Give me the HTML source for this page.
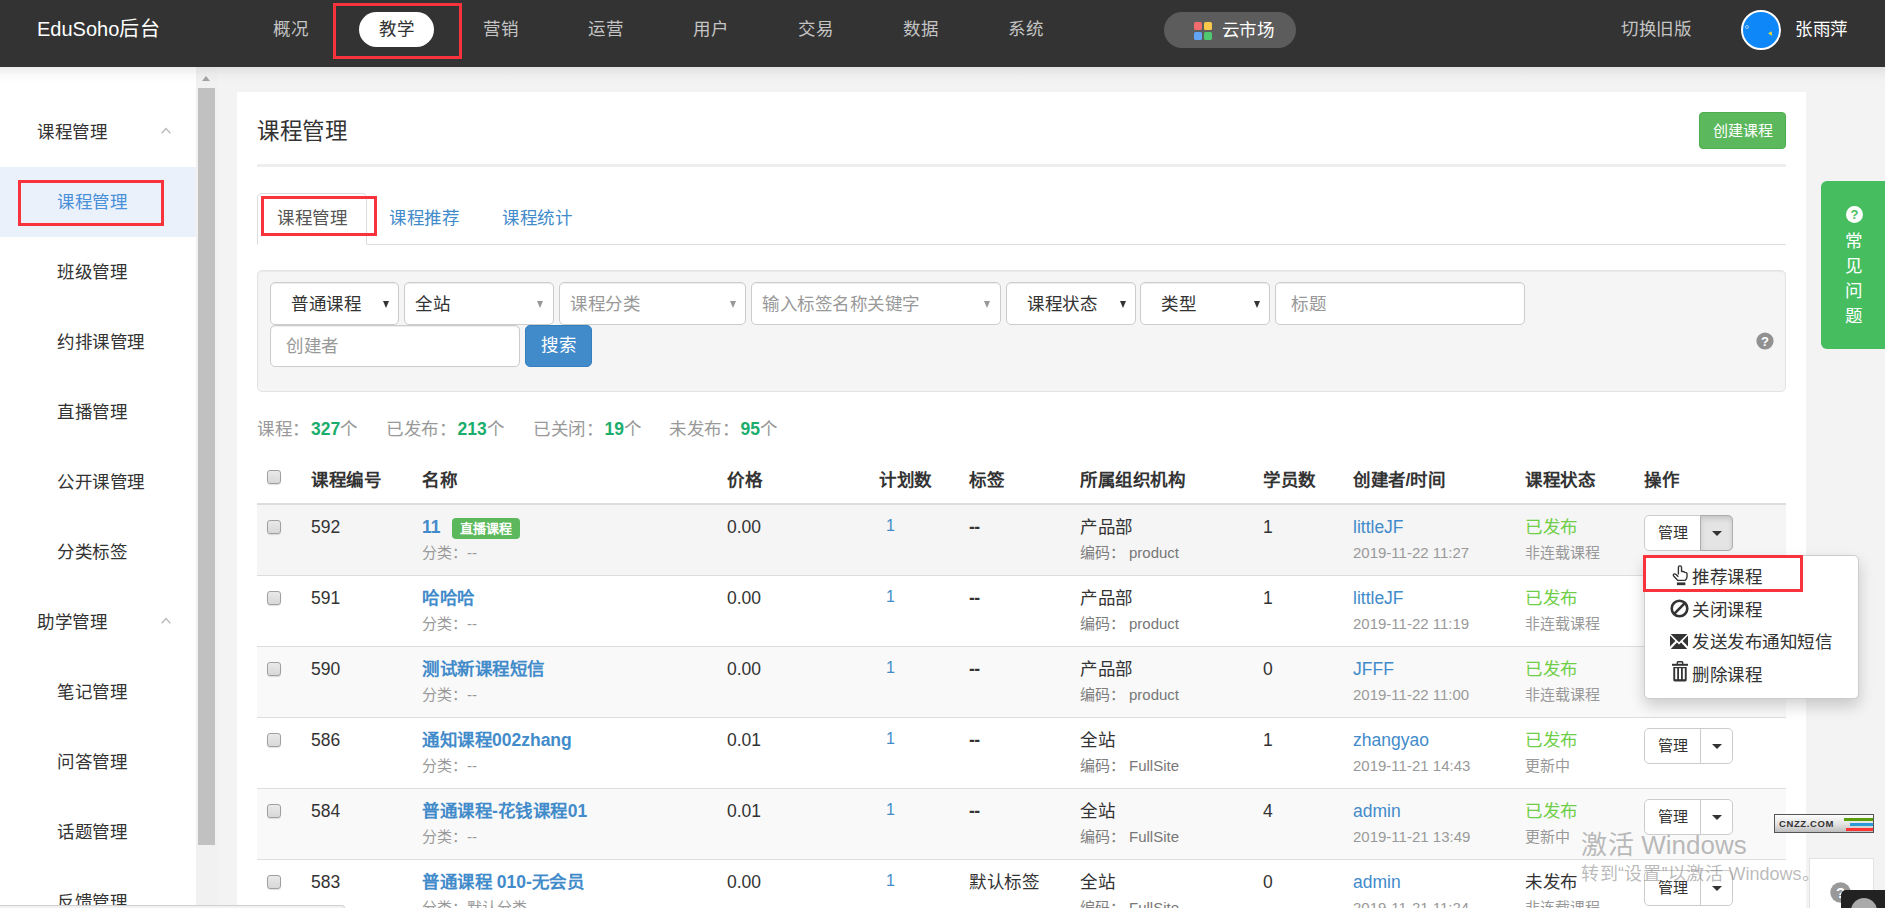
<!DOCTYPE html>
<html lang="zh-CN">
<head>
<meta charset="utf-8">
<title>课程管理</title>
<style>
*{box-sizing:border-box;margin:0;padding:0}
html,body{width:1885px;height:908px;overflow:hidden;background:#f3f3f3;font-family:"Liberation Sans",sans-serif;color:#333;font-size:17.5px}
.abs{position:absolute}
#page{position:relative;width:1885px;height:908px;overflow:hidden}
/* top nav */
#nav{left:0;top:0;width:1885px;height:67px;background:#333}
#nav .t{position:absolute;top:0;height:58px;line-height:58px;font-size:17.5px;color:#c4c4c4;white-space:nowrap}
#brand{left:37px;font-size:20px !important;color:#fff !important}
.pill{position:absolute;left:359px;top:12px;width:75px;height:35px;border-radius:18px;background:#fff;color:#333;font-size:17.5px;line-height:34px;text-align:center}
.redbox{position:absolute;border:3px solid #f8333c}
#cloud{position:absolute;left:1163.5px;top:12px;width:132px;height:36px;border-radius:18px;background:#5c5c5c;color:#fff;font-size:17.5px;line-height:36px}
#avatar{position:absolute;left:1741px;top:10px;width:40px;height:40px;border-radius:50%;background:#0e87f8;border:2.7px solid #fff}
/* sidebar */
#side{left:0;top:67px;width:196px;height:841px;background:#fff}
#side .g{position:absolute;left:37px;margin-top:.5px;font-size:17.5px;color:#333;height:30px;line-height:30px;white-space:nowrap}
#side .i{position:absolute;left:57px;margin-top:.5px;font-size:17.5px;color:#333;height:30px;line-height:30px;white-space:nowrap}
#sbar{left:196px;top:67px;width:20.5px;height:841px;background:#f1f1f1}
#sthumb{left:198px;top:88px;width:17px;height:757px;background:#c1c1c1}

#side .chev{position:absolute;left:161px;width:10px;height:7px}
#side .act{position:absolute;left:0;top:100px;width:196px;height:70px;background:#eaf1fb}
#sideshadow{left:0;top:67px;width:1885px;height:16px;background:linear-gradient(rgba(0,0,0,.075),rgba(0,0,0,.02) 55%,rgba(0,0,0,0))}
/* main header */
#title{left:257px;top:115.3px;font-size:22.5px;line-height:34px;color:#333;white-space:nowrap}
#create{left:1699px;top:112px;width:87px;height:37px;border-radius:4px;background:#5cb85c;border:1px solid #4cae4c;color:#fff;font-size:15px;line-height:35px;text-align:center}
#hr1{left:257px;top:164px;width:1529px;height:3px;background:#eee}
#tabline{left:257px;top:244px;width:1529px;height:1px;background:#ddd}
#tab1{left:257px;top:192.5px;width:110px;height:52.5px;border:1px solid #ddd;border-bottom:1px solid #fff;border-radius:5px 5px 0 0;background:#fff}
.tabt{position:absolute;top:203px;height:30px;line-height:30px;font-size:17.5px;white-space:nowrap}
/* well */
#well{left:257px;top:270px;width:1529px;height:122px;background:#f5f5f5;border:1px solid #e3e3e3;border-radius:5px;box-shadow:inset 0 1px 1px rgba(0,0,0,.05)}
.sel{position:absolute;top:282px;height:43px;background:#fff;border:1px solid #ccc;border-radius:5px;font-size:17.5px;line-height:41px;white-space:nowrap;box-shadow:inset 0 1px 1px rgba(0,0,0,.075)}
.sel span{position:absolute;top:1px}
.sel i{position:absolute;top:17.5px;margin-left:1px;width:0;height:0;border-left:3.5px solid transparent;border-right:3.5px solid transparent;border-top:7px solid #333}
.sel i.g{border-top-color:#999}
.ph{color:#999}
#search{left:525px;top:325px;width:67px;height:42px;border-radius:5px;background:#428bca;border:1px solid #357ebd;color:#fff;font-size:17.5px;line-height:38px;text-align:center}

/* stats */
.st{position:absolute;top:413.7px;height:30px;line-height:30px;font-size:17.5px;color:#999;white-space:nowrap}
.st b{color:#1bad6c;font-weight:bold;margin-left:1.5px}
/* table */
.th{position:absolute;top:465px;height:30px;line-height:30px;font-size:17.5px;font-weight:bold;color:#333;white-space:nowrap}
.row{position:absolute;left:257px;width:1529px;height:71px;border-top:1px solid #ddd}
.row div,.row a{position:absolute;white-space:nowrap}
.l1{top:6.5px;height:30px;line-height:30px;font-size:17.5px;color:#333}
.l2{top:34.8px;height:26px;line-height:26px;font-size:15px;color:#999}
.lk{color:#428bca}
.ok{color:#6fce47}
.cb{position:absolute;left:10px;top:15.2px;width:14px;height:14px;border:1px solid #a0a0a0;border-radius:3px;background:linear-gradient(#e9e9e9,#d8d8d8);box-shadow:0 1px 1px rgba(0,0,0,.12)}
.lab{top:12.5px;left:195px;width:68px;height:21px;border-radius:4px;background:#5cb85c;color:#fff;font-size:13px;font-weight:bold;line-height:21px;text-align:center}
.btn{left:1387px;top:10px;width:89px;height:36px;border:1px solid #ccc;border-radius:5px;background:#fff}
.btn span{position:absolute;left:13px;top:0;line-height:34px;font-size:15px;color:#333}
.btn em{position:absolute;left:55px;top:0;width:1px;height:34px;background:#ccc}
.btn i{position:absolute;left:67px;top:15px;width:0;height:0;border-left:5px solid transparent;border-right:5px solid transparent;border-top:5px solid #333}
/* dropdown */
#menu{left:1644px;top:554.7px;width:215px;height:144px;background:#fff;border:1px solid #ccc;border-radius:5px;box-shadow:0 7px 15px rgba(0,0,0,.18)}
.mi{position:absolute;left:1692px;height:30px;line-height:30px;font-size:17.5px;color:#333;white-space:nowrap}
/* right tab */
#faq{left:1821px;top:181px;width:70px;height:168px;border-radius:6px;background:#46be60}
.fq{position:absolute;left:1845px;width:18px;height:24px;line-height:24px;font-size:17.5px;color:#fff;text-align:center}
.c{letter-spacing:.5px}
#title .c{letter-spacing:-.5px}
.l2 .c,.btn .c,.lab .c,#create .c,.wm .c{letter-spacing:0}
/* main */
#main{left:237px;top:92px;width:1569px;height:830px;background:#fff}
</style>
</head>
<body>
<div id="page">

<!-- NAV -->
<div id="nav" class="abs">
  <div class="t" id="brand">EduSoho<font class="c">后台</font></div>
  <div class="t" style="left:273px"><font class="c">概况</font></div>
  <div class="pill"><font class="c">教学</font></div>
  <div class="redbox" style="left:333px;top:3px;width:129px;height:56px"></div>
  <div class="t" style="left:483px"><font class="c">营销</font></div>
  <div class="t" style="left:588px"><font class="c">运营</font></div>
  <div class="t" style="left:693px"><font class="c">用户</font></div>
  <div class="t" style="left:798px"><font class="c">交易</font></div>
  <div class="t" style="left:903px"><font class="c">数据</font></div>
  <div class="t" style="left:1008px"><font class="c">系统</font></div>
  <div id="cloud"><svg style="position:absolute;left:30px;top:10px" width="18" height="18" viewBox="0 0 18 18"><rect x="0" y="0" width="8" height="8" rx="1.6" fill="#f06b6b"/><rect x="10" y="0" width="8" height="8" rx="1.6" fill="#fbc94a"/><rect x="0" y="10" width="8" height="8" rx="1.6" fill="#62a4f4"/><rect x="10" y="10" width="8" height="8" rx="1.6" fill="#4fc870"/></svg><span style="position:absolute;left:58px"><font class="c">云市场</font></span></div>
  <div class="t" style="left:1621px"><font class="c">切换旧版</font></div>
  <div id="avatar"><i style="position:absolute;left:26px;top:20px;width:0;height:0;border-left:4px solid #f5dc2a;border-top:2.5px solid transparent;border-bottom:2.5px solid transparent;transform:rotate(55deg)"></i><i style="position:absolute;left:2px;top:13px;width:4px;height:4px;border-radius:50%;border:1px solid rgba(255,255,255,.55)"></i></div>
  <div class="t" style="left:1795px;color:#fff"><font class="c">张雨萍</font></div>
</div>

<!-- SIDEBAR -->
<div id="side" class="abs">
  <div class="g" style="top:49px"><font class="c">课程管理</font></div>
  <svg class="chev" style="top:60px" viewBox="0 0 10 7"><path d="M0.7 6.3 L5 1.6 L9.3 6.3" fill="none" stroke="#bbb" stroke-width="1.4"/></svg>
  <div class="act"></div>
  <div class="i" style="top:119px;color:#4a90d9"><font class="c">课程管理</font></div>
  <div class="redbox" style="left:18px;top:113px;width:146px;height:46px;border-width:3px"></div>
  <div class="i" style="top:189px"><font class="c">班级管理</font></div>
  <div class="i" style="top:259px"><font class="c">约排课管理</font></div>
  <div class="i" style="top:329px"><font class="c">直播管理</font></div>
  <div class="i" style="top:399px"><font class="c">公开课管理</font></div>
  <div class="i" style="top:469px"><font class="c">分类标签</font></div>
  <div class="g" style="top:539px"><font class="c">助学管理</font></div>
  <svg class="chev" style="top:550px" viewBox="0 0 10 7"><path d="M0.7 6.3 L5 1.6 L9.3 6.3" fill="none" stroke="#bbb" stroke-width="1.4"/></svg>
  <div class="i" style="top:609px"><font class="c">笔记管理</font></div>
  <div class="i" style="top:679px"><font class="c">问答管理</font></div>
  <div class="i" style="top:749px"><font class="c">话题管理</font></div>
  <div class="i" style="top:819px"><font class="c">反馈管理</font></div>
</div>
<div id="sbar" class="abs"></div>
<div id="sthumb" class="abs"></div>
<div class="abs" style="left:202px;top:76px;width:0;height:0;border-left:4.5px solid transparent;border-right:4.5px solid transparent;border-bottom:5px solid #a3a3a3"></div>
<div id="sideshadow" class="abs"></div>

<!-- MAIN -->
<div id="main" class="abs"></div>
<div id="title" class="abs"><font class="c">课程管理</font></div>
<div id="create" class="abs"><font class="c">创建课程</font></div>
<div id="hr1" class="abs"></div>
<div id="tabline" class="abs"></div>
<div id="tab1" class="abs"></div>
<div class="tabt" style="left:277px;color:#555"><font class="c">课程管理</font></div>
<div class="tabt" style="left:389px;color:#428bca"><font class="c">课程推荐</font></div>
<div class="tabt" style="left:502px;color:#428bca"><font class="c">课程统计</font></div>
<div class="redbox" style="left:260.5px;top:195.5px;width:116px;height:40px;border-width:3px"></div>

<div id="well" class="abs"></div>
<div class="sel" style="left:270px;width:129px"><span style="left:20px"><font class="c">普通课程</font></span><i style="left:111px"></i></div>
<div class="sel" style="left:404px;width:150px"><span style="left:10px"><font class="c">全站</font></span><i class="g" style="left:131px"></i></div>
<div class="sel" style="left:559px;width:187px"><span class="ph" style="left:10px"><font class="c">课程分类</font></span><i class="g" style="left:169px"></i></div>
<div class="sel" style="left:751px;width:250px"><span class="ph" style="left:10px"><font class="c">输入标签名称关键字</font></span><i class="g" style="left:231px"></i></div>
<div class="sel" style="left:1006px;width:130px"><span style="left:20px"><font class="c">课程状态</font></span><i style="left:112px"></i></div>
<div class="sel" style="left:1140px;width:130px"><span style="left:20px"><font class="c">类型</font></span><i style="left:112px"></i></div>
<div class="sel" style="left:1275px;width:250px"><span class="ph" style="left:15px"><font class="c">标题</font></span></div>
<div class="sel" style="left:270px;top:325px;width:250px;height:42px"><span class="ph" style="left:15px;top:0px"><font class="c">创建者</font></span></div>
<div id="search" class="abs"><font class="c">搜索</font></div>
<svg class="abs" style="left:1756px;top:332px" width="18" height="18" viewBox="0 0 18 18"><circle cx="9" cy="9" r="8.6" fill="#919191"/><text x="9" y="14" font-family="Liberation Sans" font-weight="bold" font-size="13" fill="#fff" text-anchor="middle">?</text></svg>


<div class="st" style="left:257px"><font class="c">课程：</font><b>327</b><font class="c">个</font></div>
<div class="st" style="left:386px"><font class="c">已发布：</font><b>213</b><font class="c">个</font></div>
<div class="st" style="left:533px"><font class="c">已关闭：</font><b>19</b><font class="c">个</font></div>
<div class="st" style="left:669px"><font class="c">未发布：</font><b>95</b><font class="c">个</font></div>

<span class="cb" style="left:267px;top:470px"></span>
<div class="th" style="left:311px"><font class="c">课程编号</font></div>
<div class="th" style="left:422px"><font class="c">名称</font></div>
<div class="th" style="left:727px"><font class="c">价格</font></div>
<div class="th" style="left:879px"><font class="c">计划数</font></div>
<div class="th" style="left:969px"><font class="c">标签</font></div>
<div class="th" style="left:1080px"><font class="c">所属组织机构</font></div>
<div class="th" style="left:1263px"><font class="c">学员数</font></div>
<div class="th" style="left:1353px"><font class="c">创建者</font>/<font class="c">时间</font></div>
<div class="th" style="left:1525px"><font class="c">课程状态</font></div>
<div class="th" style="left:1644px"><font class="c">操作</font></div>
<div class="abs" style="left:257px;top:502.5px;width:1529px;height:2.5px;background:#ddd;z-index:2"></div>
<div class="row" style="top:504px;background:#f5f5f5"><span class="cb"></span><div class="l1" style="left:54px">592</div><div class="l1 lk" style="left:165px;font-weight:bold">11</div><div class="lab"><font class="c">直播课程</font></div><div class="l2" style="left:165px"><font class="c">分类：</font>--</div><div class="l1" style="left:470px">0.00</div><div class="l1 lk" style="left:629px;font-size:16px;top:6px">1</div><div class="l1" style="left:712px;font-weight:bold;letter-spacing:-.5px">--</div><div class="l1" style="left:823px"><font class="c">产品部</font></div><div class="l2" style="left:823px;color:#7d7d7d"><font class="c">编码：</font></div><div class="l2" style="left:872px;color:#777">product</div><div class="l1" style="left:1006px">1</div><div class="l1 lk" style="left:1096px">littleJF</div><div class="l2" style="left:1096px">2019-11-22 11:27</div><div class="l1 ok" style="left:1268px"><font class="c">已发布</font></div><div class="l2" style="left:1268px"><font class="c">非连载课程</font></div><div class="btn"><span><font class="c">管理</font></span><em></em><b style="position:absolute;left:55px;top:-1px;width:33px;height:36px;background:#e4e4e4;border:1px solid #adadad;border-radius:0 5px 5px 0;box-shadow:inset 0 3px 5px rgba(0,0,0,.125)"></b><i></i></div></div>
<div class="row" style="top:575.1px;background:#fff"><span class="cb"></span><div class="l1" style="left:54px">591</div><div class="l1 lk" style="left:165px;font-weight:bold"><font class="c">哈哈哈</font></div><div class="l2" style="left:165px"><font class="c">分类：</font>--</div><div class="l1" style="left:470px">0.00</div><div class="l1 lk" style="left:629px;font-size:16px;top:6px">1</div><div class="l1" style="left:712px;font-weight:bold;letter-spacing:-.5px">--</div><div class="l1" style="left:823px"><font class="c">产品部</font></div><div class="l2" style="left:823px;color:#7d7d7d"><font class="c">编码：</font></div><div class="l2" style="left:872px;color:#777">product</div><div class="l1" style="left:1006px">1</div><div class="l1 lk" style="left:1096px">littleJF</div><div class="l2" style="left:1096px">2019-11-22 11:19</div><div class="l1 ok" style="left:1268px"><font class="c">已发布</font></div><div class="l2" style="left:1268px"><font class="c">非连载课程</font></div><div class="btn"><span><font class="c">管理</font></span><em></em><i></i></div></div>
<div class="row" style="top:646.2px;background:#f9f9f9"><span class="cb"></span><div class="l1" style="left:54px">590</div><div class="l1 lk" style="left:165px;font-weight:bold"><font class="c">测试新课程短信</font></div><div class="l2" style="left:165px"><font class="c">分类：</font>--</div><div class="l1" style="left:470px">0.00</div><div class="l1 lk" style="left:629px;font-size:16px;top:6px">1</div><div class="l1" style="left:712px;font-weight:bold;letter-spacing:-.5px">--</div><div class="l1" style="left:823px"><font class="c">产品部</font></div><div class="l2" style="left:823px;color:#7d7d7d"><font class="c">编码：</font></div><div class="l2" style="left:872px;color:#777">product</div><div class="l1" style="left:1006px">0</div><div class="l1 lk" style="left:1096px">JFFF</div><div class="l2" style="left:1096px">2019-11-22 11:00</div><div class="l1 ok" style="left:1268px"><font class="c">已发布</font></div><div class="l2" style="left:1268px"><font class="c">非连载课程</font></div><div class="btn"><span><font class="c">管理</font></span><em></em><i></i></div></div>
<div class="row" style="top:717.3px;background:#fff"><span class="cb"></span><div class="l1" style="left:54px">586</div><div class="l1 lk" style="left:165px;font-weight:bold"><font class="c">通知课程</font>002zhang</div><div class="l2" style="left:165px"><font class="c">分类：</font>--</div><div class="l1" style="left:470px">0.01</div><div class="l1 lk" style="left:629px;font-size:16px;top:6px">1</div><div class="l1" style="left:712px;font-weight:bold;letter-spacing:-.5px">--</div><div class="l1" style="left:823px"><font class="c">全站</font></div><div class="l2" style="left:823px;color:#7d7d7d"><font class="c">编码：</font></div><div class="l2" style="left:872px;color:#777">FullSite</div><div class="l1" style="left:1006px">1</div><div class="l1 lk" style="left:1096px">zhangyao</div><div class="l2" style="left:1096px">2019-11-21 14:43</div><div class="l1 ok" style="left:1268px"><font class="c">已发布</font></div><div class="l2" style="left:1268px"><font class="c">更新中</font></div><div class="btn"><span><font class="c">管理</font></span><em></em><i></i></div></div>
<div class="row" style="top:788.2px;background:#f9f9f9"><span class="cb"></span><div class="l1" style="left:54px">584</div><div class="l1 lk" style="left:165px;font-weight:bold"><font class="c">普通课程</font>-<font class="c">花钱课程</font>01</div><div class="l2" style="left:165px"><font class="c">分类：</font>--</div><div class="l1" style="left:470px">0.01</div><div class="l1 lk" style="left:629px;font-size:16px;top:6px">1</div><div class="l1" style="left:712px;font-weight:bold;letter-spacing:-.5px">--</div><div class="l1" style="left:823px"><font class="c">全站</font></div><div class="l2" style="left:823px;color:#7d7d7d"><font class="c">编码：</font></div><div class="l2" style="left:872px;color:#777">FullSite</div><div class="l1" style="left:1006px">4</div><div class="l1 lk" style="left:1096px">admin</div><div class="l2" style="left:1096px">2019-11-21 13:49</div><div class="l1 ok" style="left:1268px"><font class="c">已发布</font></div><div class="l2" style="left:1268px"><font class="c">更新中</font></div><div class="btn"><span><font class="c">管理</font></span><em></em><i></i></div></div>
<div class="row" style="top:859.2px;background:#fff"><span class="cb"></span><div class="l1" style="left:54px">583</div><div class="l1 lk" style="left:165px;font-weight:bold"><font class="c">普通课程</font> 010-<font class="c">无会员</font></div><div class="l2" style="left:165px"><font class="c">分类：默认分类</font></div><div class="l1" style="left:470px">0.00</div><div class="l1 lk" style="left:629px;font-size:16px;top:6px">1</div><div class="l1" style="left:712px"><font class="c">默认标签</font></div><div class="l1" style="left:823px"><font class="c">全站</font></div><div class="l2" style="left:823px;color:#7d7d7d"><font class="c">编码：</font></div><div class="l2" style="left:872px;color:#777">FullSite</div><div class="l1" style="left:1006px">0</div><div class="l1 lk" style="left:1096px">admin</div><div class="l2" style="left:1096px">2019-11-21 11:24</div><div class="l1 " style="left:1268px"><font class="c">未发布</font></div><div class="l2" style="left:1268px"><font class="c">非连载课程</font></div><div class="btn"><span><font class="c">管理</font></span><em></em><i></i></div></div>
<div id="menu" class="abs"></div>
<div class="mi" style="top:562px"><font class="c">推荐课程</font></div>
<div class="mi" style="top:595px"><font class="c">关闭课程</font></div>
<div class="mi" style="top:627px"><font class="c">发送发布通知短信</font></div>
<div class="mi" style="top:660px"><font class="c">删除课程</font></div>
<div class="redbox" style="left:1642.5px;top:554.5px;width:160px;height:37px;border-width:3px"></div>

<div id="faq" class="abs"></div>
<svg class="abs" style="left:1846px;top:206px" width="17" height="17" viewBox="0 0 17 17"><circle cx="8.5" cy="8.5" r="8.5" fill="#fff"/><text x="8.5" y="13.2" font-family="Liberation Sans" font-weight="bold" font-size="13" fill="#46be60" text-anchor="middle">?</text></svg>
<div class="fq" style="top:229px"><font class="c">常</font></div>
<div class="fq" style="top:254px"><font class="c">见</font></div>
<div class="fq" style="top:279px"><font class="c">问</font></div>
<div class="fq" style="top:304px"><font class="c">题</font></div>

<!-- menu icons -->
<svg class="abs" style="left:1670.6px;top:565.3px" width="19" height="21" viewBox="0 0 18 20" preserveAspectRatio="none"><path d="M7 9 V2.3 a1.5 1.5 0 0 1 3 0 V6.3 q2.3 -0.4 3.1 0.7 q2.1 -0.1 2.1 1.9 V11 q0 2.3 -1.7 3.6 H6.3 Q4.6 12.6 2.5 10.4 q-0.8 -1.2 0.3 -1.8 q1 -0.4 2 0.5 L7 11.2" fill="#fff" stroke="#333" stroke-width="1.3" stroke-linejoin="round"/><rect x="5.6" y="16.6" width="8" height="2.6" fill="#333"/></svg>
<svg class="abs" style="left:1670px;top:599px" width="19" height="19" viewBox="0 0 19 19"><circle cx="9.5" cy="9.5" r="7.8" fill="none" stroke="#333" stroke-width="2.6"/><path d="M4.4 14.6 L14.6 4.4" stroke="#333" stroke-width="2.6"/></svg>
<svg class="abs" style="left:1670px;top:634px" width="18" height="15" viewBox="0 0 18 15"><g fill="#333"><path d="M0.6 0 H17.4 L9 8.2 Z"/><path d="M0 1.6 L5.4 7 L0 12.4 Z"/><path d="M18 1.6 L12.6 7 L18 12.4 Z"/><path d="M0.8 15 L6.9 8.6 L9 10.6 L11.1 8.6 L17.2 15 Z"/></g></svg>
<svg class="abs" style="left:1672px;top:661px" width="16" height="21" viewBox="0 0 16 21"><path d="M5.3 3 V1.6 Q5.3 0.8 6.1 0.8 H9.9 Q10.7 0.8 10.7 1.6 V3" fill="none" stroke="#333" stroke-width="1.4"/><rect x="0" y="2.8" width="16" height="2" fill="#333"/><path d="M1.3 5.9 H14.7 V19 Q14.7 20.4 13.3 20.4 H2.7 Q1.3 20.4 1.3 19 Z" fill="#333"/><g fill="#fff"><rect x="3.2" y="7.2" width="2" height="11"/><rect x="7" y="7.2" width="2" height="11"/><rect x="10.8" y="7.2" width="2" height="11"/></g></svg>

<!-- cnzz badge -->
<div class="abs" style="left:1774px;top:814px;width:100px;height:19px;border:1px solid #555;background:linear-gradient(#fdfdfd,#e2e2e2 55%,#bdbdbd)"></div>
<div class="abs" style="left:1779px;top:814.5px;height:17px;line-height:17px;font-size:9.5px;font-weight:bold;color:#333;letter-spacing:0.6px;white-space:nowrap">CNZZ.COM</div>
<div class="abs" style="left:1844px;top:818px;width:29px;height:2.5px;background:#5a9e0a"></div>
<div class="abs" style="left:1850px;top:823px;width:23px;height:2.5px;background:#2d9ad8"></div>
<div class="abs" style="left:1846px;top:828px;width:27px;height:2.5px;background:#f33"></div>

<!-- bottom-right box -->
<div class="abs" style="left:1809px;top:858px;width:65px;height:60px;background:#fff;border:1px solid #e3e3e3"></div>
<svg class="abs" style="left:1830px;top:882px" width="21" height="21" viewBox="0 0 21 21"><circle cx="10.5" cy="10.5" r="10.2" fill="#999"/><text x="10.5" y="16" font-family="Liberation Sans" font-weight="bold" font-size="15" fill="#fff" text-anchor="middle">?</text></svg>
<div class="abs" style="left:1841px;top:890px;width:60px;height:30px;background:#222;border-radius:5px 0 0 0"></div>
<div class="abs" style="left:1851px;top:898px;width:26px;height:26px;border-radius:50%;background:#aaa"></div>

<!-- status bar bottom-left -->
<div class="abs" style="left:-2px;top:905px;width:347px;height:10px;background:#f2f2f2;border:1px solid #cfcfcf;border-radius:0 3px 0 0"></div>

<!-- windows watermark -->
<div class="abs" style="left:1581px;top:828px;height:34px;line-height:34px;font-size:26px;color:rgba(120,120,120,.5);white-space:nowrap;font-weight:300"><font class="c">激活</font> Windows</div>
<div class="abs" style="left:1581px;top:860.5px;height:26px;line-height:26px;font-size:18px;color:rgba(120,120,120,.5);white-space:nowrap;font-weight:300"><font class="c">转到“设置”以激活</font> Windows<font class="c">。</font></div>

</div>
</body>
</html>
